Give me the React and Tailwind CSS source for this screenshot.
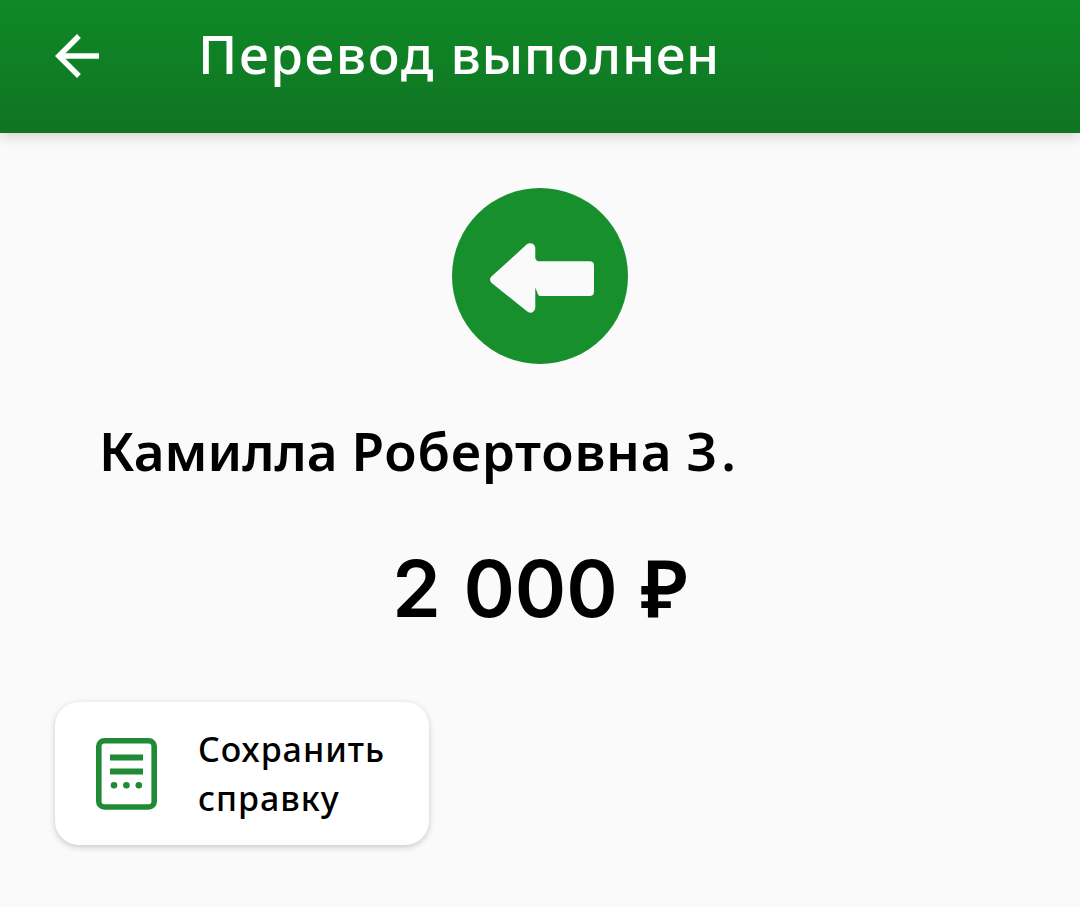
const BackArrow = () => (
    <svg className="size-[66px]" viewBox="0 0 24 24" fill="currentColor">
        <path d="M20 11H7.83l5.59-5.59L12 4l-8 8 8 8 1.41-1.41L7.83 13H20v-2z" />
    </svg>
);

const TransferIcon = () => (
    <svg className="size-44" viewBox="0 0 176 176">
        <circle cx="88" cy="88" r="88" fill="#168f2c" />
        <path
            fill="#fafafa"
            d="M39.4 88.6 74.6 56.6Q77 54.4 80 55.6Q83.3 57 83.3 61V70.5Q84.5 73.3 87 73.3H137.5Q142 73.3 142 77.5V103.5Q142 108 137.5 108H88Q86.5 108 85.8 106L83.3 99.5V119Q83.3 123 80 124.4Q77 125.4 74.6 123L39.4 94.8Q36.6 91.6 39.4 88.6Z"
        />
    </svg>
);

const ReceiptIcon = () => (
    <svg className="w-[61px] h-[72px] shrink-0" viewBox="0 0 61 72">
        <rect x="2.8" y="2.8" width="55.4" height="66.2" rx="5.5" fill="none" stroke="#218a35" strokeWidth="5.6" />
        <g fill="#218a35">
            <rect x="14" y="16.5" width="33" height="6" />
            <rect x="14" y="30.5" width="33" height="6" />
            <circle cx="18" cy="47.2" r="3.3" />
            <circle cx="30.4" cy="47.2" r="3.3" />
            <circle cx="42.8" cy="47.2" r="3.3" />
        </g>
    </svg>
);

const App = () => {
    return (
        <div className="min-h-[907px] bg-[#fafafa] text-black font-['Noto_Sans',sans-serif] whitespace-nowrap">
            <header className="h-[133px] pl-11 pt-[18px] flex items-start bg-linear-to-b from-[#0f8927] to-[#107422] text-white shadow-[0_2px_14px_rgba(0,0,0,0.2)]">
                <button className="mt-[5px]" aria-label="Назад">
                    <BackArrow />
                </button>
                <h1 className="ml-[88px] text-[53px] leading-[72px] font-medium">
                    <span className="tracking-[1.6px]">Перевод </span>
                    <span className="tracking-[0.6px]">выполнен</span>
                </h1>
            </header>

            <main className="flex flex-col pt-[55px]">
                <div className="self-center">
                    <TransferIcon />
                </div>
                <h2 className="mt-[51px] ml-[99px] text-[53px] leading-[72px] font-semibold">
                    Камилла <span className="tracking-[0.75px]">Робертовна</span>{' '}
                    <span className="tracking-[4px]">З.</span>
                </h2>
                <p className="mt-[52px] text-center text-[78px] leading-[100px] font-semibold font-['Inter',sans-serif] [word-spacing:3px]">
                    2 000 <span className="text-[80px] leading-none font-['Noto_Sans',sans-serif]">₽</span>
                </p>

                <button className="mt-[63px] ml-[55px] w-[374px] h-[143px] pl-[41px] flex items-center text-left bg-white rounded-3xl shadow-[0_2px_6px_rgba(0,0,0,0.2)]">
                    <ReceiptIcon />
                    <span className="ml-[41px] text-[34px] leading-[49px] font-medium tracking-[1px]">
                        Сохранить
                        <br />
                        справку
                    </span>
                </button>
            </main>
        </div>
    );
};

export default App;
